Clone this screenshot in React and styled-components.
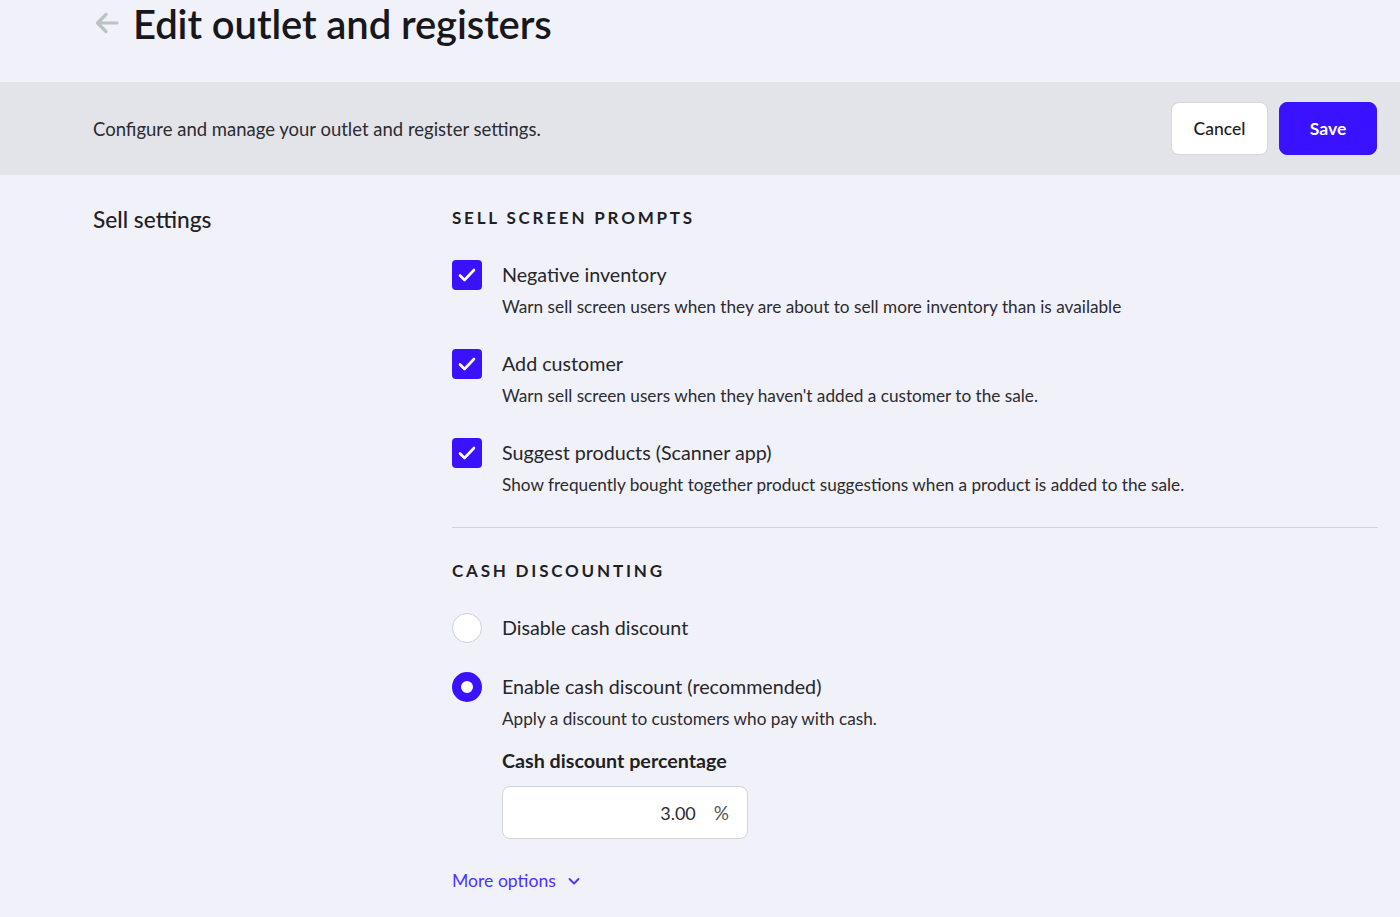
import styled, { createGlobalStyle } from "styled-components";

const Global = createGlobalStyle`
  html, body {
    margin: 0;
    padding: 0;
    background: #f1f1f9;
    font-family: Lato, "Open Sans", sans-serif;
    color: #1f1f24;
  }
`;

const Page = styled.div`
  width: 1400px;
  min-height: 917px;
  background: #f1f1f9;
`;

const TitleBar = styled.div`
  display: flex;
  align-items: center;
  gap: 12px;
  height: 48px;
  padding-left: 93px;
  margin-bottom: 34px;
`;

const BackArrow = styled.span`
  display: flex;
  color: #b9c3c3;
  margin-top: -2px;
`;

const Title = styled.h1`
  margin: 0;
  font-size: 40px;
  font-weight: 600;
  letter-spacing: -0.1px;
  color: #17171c;
`;

const Toolbar = styled.div`
  display: flex;
  align-items: center;
  justify-content: space-between;
  height: 93px;
  padding: 0 23px 0 93px;
  background: #e3e4ea;
`;

const Intro = styled.p`
  margin: 0;
  font-size: 18.5px;
  color: #2b2b30;
`;

const Actions = styled.div`
  display: flex;
  gap: 11px;
`;

const Button = styled.button`
  height: 53px;
  width: ${(p) => (p.$primary ? "98px" : "97px")};
  border-radius: 8px;
  font-family: Lato, sans-serif;
  font-size: 17.5px;
  font-weight: ${(p) => (p.$primary ? 700 : 500)};
  cursor: pointer;
  background: ${(p) => (p.$primary ? "#3a12ff" : "#ffffff")};
  color: ${(p) => (p.$primary ? "#ffffff" : "#1d1d22")};
  border: 1px solid ${(p) => (p.$primary ? "#3a12ff" : "#d6d7dc")};
`;

const Body = styled.div`
  display: grid;
  grid-template-columns: 359px 926px;
  padding: 32px 0 0 93px;
`;

const SideHeading = styled.h2`
  margin: 0;
  font-size: 22.7px;
  font-weight: 500;
  line-height: 26px;
  color: #1f1f24;
`;

const Section = styled.section`
  padding-bottom: ${(p) => (p.$last ? "0" : "31px")};
  border-bottom: ${(p) => (p.$last ? "none" : "1px solid #d2d3d9")};
  margin-bottom: ${(p) => (p.$last ? "0" : "32px")};
`;

const SectionTitle = styled.h3`
  margin: 0 0 31px;
  font-size: 17px;
  font-weight: 700;
  letter-spacing: 2.8px;
  text-transform: uppercase;
  color: #1f1f24;
  line-height: 22px;
`;

const Options = styled.div`
  display: flex;
  flex-direction: column;
  gap: ${(p) => p.$gap || "31px"};
`;

const Option = styled.label`
  display: flex;
  align-items: flex-start;
  gap: 20px;
`;

const Box = styled.span`
  flex: none;
  width: 30px;
  height: 30px;
  border-radius: 4px;
  background: #3a12ff;
  display: flex;
  align-items: center;
  justify-content: center;
`;

const Radio = styled.span`
  flex: none;
  box-sizing: border-box;
  width: 30px;
  height: 30px;
  border-radius: 50%;
  background: #ffffff;
  border: ${(p) => (p.$checked ? "9px solid #3a12ff" : "1px solid #cfd0d6")};
`;

const OptionText = styled.div`
  display: flex;
  flex-direction: column;
  padding-top: 2px;
`;

const OptionLabel = styled.span`
  font-size: 19.7px;
  line-height: 26px;
  color: #26262b;
`;

const OptionHint = styled.span`
  margin-top: 8px;
  font-size: 17.2px;
  line-height: 22px;
  color: #2b2b30;
`;

const FieldLabel = styled.span`
  margin-top: 18px;
  font-size: 19.7px;
  font-weight: 700;
  line-height: 26px;
  color: #1f1f24;
`;

const InputBox = styled.div`
  margin-top: 12px;
  width: 246px;
  height: 53px;
  box-sizing: border-box;
  background: #ffffff;
  border: 1px solid #d3d4da;
  border-radius: 8px;
  display: flex;
  align-items: center;
  justify-content: flex-end;
  gap: 18px;
  padding-right: 18px;
  font-size: 18px;
  color: #2b2b30;
`;

const Suffix = styled.span`
  color: #55555c;
  font-size: 19px;
`;

const MoreLink = styled.a`
  display: inline-flex;
  align-items: center;
  gap: 11px;
  margin-top: 31px;
  font-size: 17.6px;
  color: #4a34ff;
  text-decoration: none;
  cursor: pointer;
`;

const Check = () => (
  <svg width="22" height="22" viewBox="0 0 22 22" fill="none">
    <path d="M4 11.5l4.5 4.5L18 6" stroke="#fff" strokeWidth="2.6" strokeLinecap="round" strokeLinejoin="round" />
  </svg>
);

const prompts = [
  { label: "Negative inventory", hint: "Warn sell screen users when they are about to sell more inventory than is available" },
  { label: "Add customer", hint: "Warn sell screen users when they haven't added a customer to the sale." },
  { label: "Suggest products (Scanner app)", hint: "Show frequently bought together product suggestions when a product is added to the sale." },
];

export default function App() {
  return (
    <Page>
      <Global />
      <TitleBar>
        <BackArrow>
          <svg width="28" height="28" viewBox="0 0 28 28" fill="none">
            <path d="M24 14H5M13 5.5L4.5 14 13 22.5" stroke="currentColor" strokeWidth="3.2" strokeLinecap="round" strokeLinejoin="round" />
          </svg>
        </BackArrow>
        <Title>Edit outlet and registers</Title>
      </TitleBar>
      <Toolbar>
        <Intro>Configure and manage your outlet and register settings.</Intro>
        <Actions>
          <Button>Cancel</Button>
          <Button $primary>Save</Button>
        </Actions>
      </Toolbar>
      <Body>
        <SideHeading>Sell settings</SideHeading>
        <div>
          <Section>
            <SectionTitle>Sell screen prompts</SectionTitle>
            <Options>
              {prompts.map((p) => (
                <Option key={p.label}>
                  <Box>
                    <Check />
                  </Box>
                  <OptionText>
                    <OptionLabel>{p.label}</OptionLabel>
                    <OptionHint>{p.hint}</OptionHint>
                  </OptionText>
                </Option>
              ))}
            </Options>
          </Section>
          <Section $last>
            <SectionTitle>Cash discounting</SectionTitle>
            <Options $gap="29px">
              <Option>
                <Radio />
                <OptionText>
                  <OptionLabel>Disable cash discount</OptionLabel>
                </OptionText>
              </Option>
              <Option>
                <Radio $checked />
                <OptionText>
                  <OptionLabel>Enable cash discount (recommended)</OptionLabel>
                  <OptionHint>Apply a discount to customers who pay with cash.</OptionHint>
                  <FieldLabel>Cash discount percentage</FieldLabel>
                  <InputBox>
                    <span>3.00</span>
                    <Suffix>%</Suffix>
                  </InputBox>
                </OptionText>
              </Option>
            </Options>
            <MoreLink>
              More options
              <svg width="14" height="14" viewBox="0 0 14 14" fill="none">
                <path d="M2.5 5l4.5 4.5L11.5 5" stroke="currentColor" strokeWidth="1.8" strokeLinecap="round" strokeLinejoin="round" />
              </svg>
            </MoreLink>
          </Section>
        </div>
      </Body>
    </Page>
  );
}
